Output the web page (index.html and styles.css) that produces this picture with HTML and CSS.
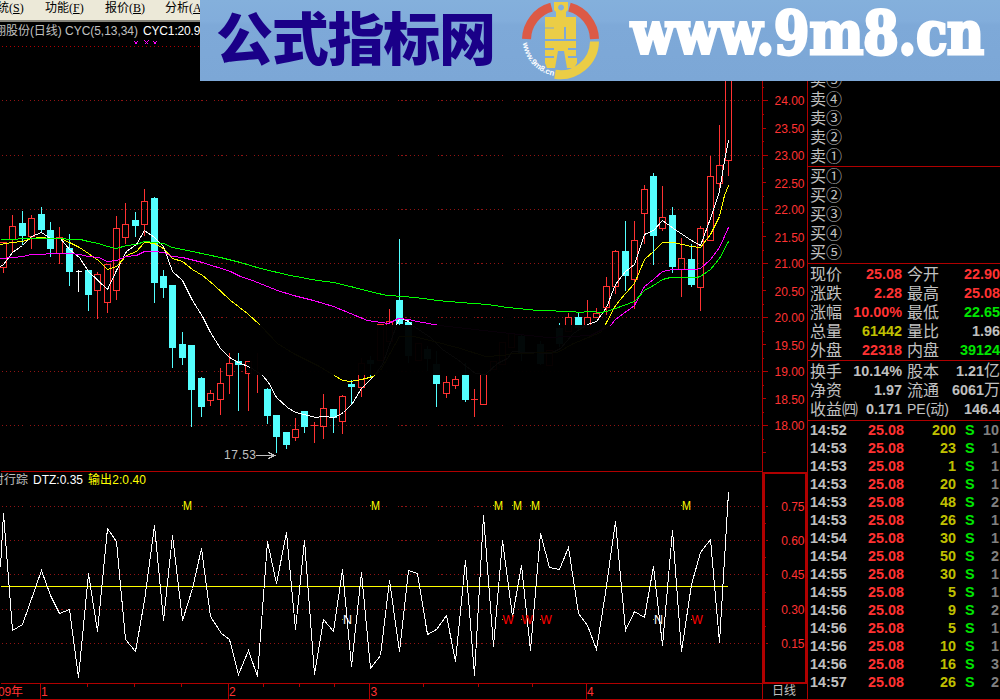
FILE: index.html
```html
<!DOCTYPE html>
<html lang="zh-CN">
<head>
    <meta charset="UTF-8">
    <meta name="viewport" content="width=device-width, initial-scale=1.0">
    <title>路翔股份 日线</title>
    <link rel="stylesheet" href="styles.css">
</head>
<body>
    <div class="app">
        <div class="left">
            <div class="menubar">
                <span>系统(<u>S</u>)</span>
                <span>功能(<u>F</u>)</span>
                <span>报价(<u>B</u>)</span>
                <span>分析(<u>A</u>)</span>
            </div>

            <svg class="chart" width="807" height="449" viewBox="0 22 807 449">
                <text class="cjk grey" x="-6" y="35" textLength="144">翔股份(日线) CYC(5,13,34)</text>
                <text class="cjk white" x="143" y="35" textLength="64">CYC1:20.93</text>
                <g class="crisp" transform="translate(.5 .5)">
                    <path class="magenta" d="M134 41l3 3m0-3l-3 3M144 40l4 4m0-4l-4 4M153 41l3 3m0-3l-3 3"/>
                    <path class="grid bright" d="M1 46H762"/>
                    <path class="grid" d="M1 100H762M1 155H762M1 209H762M1 263H762M1 317H762M1 371H762M1 425H762"/>

                    <!-- rising candles -->
                    <path class="up" d="M3 267V272M12 214V226M12 239V251M31 214V218M31 236V248M59 226V237M59 253V263M97 271V274M97 290V318M107 302V312M116 215V228M116 290V299M125 202V224M125 237V243M144 188V201M144 224V235M210 389V393M210 400V405M220 367V383M220 399V414M229 352V363M229 375V393M248 373V410M257 352V392M295 417V429M295 437V440M314 421V442M310 425H317M323 393V408M323 426V438M342 394V396M342 421V433M361 357V363M361 387V396M389 308V321M446 375V382M446 393V397M455 375V379M455 385V388M474 388V416M470 399H477M568 312V317M587 299V317M596 307V313M606 276V286M606 307V314M615 249V251M615 286V293M634 220V240M634 279V308M644 184V189M644 213V243M662 185V217M662 228V230M681 237V258M681 269V296M700 225V228M700 287V310M710 155V176M719 124V165M719 183V188M728 160V175"/>
                    <path class="up" d="M-1 242h7v25h-7zM9 226h6v13h-6zM28 218h6v18h-6zM56 237h6v16h-6zM94 274h6v16h-6zM104 264h6v38h-6zM113 228h6v62h-6zM122 224h6v13h-6zM141 201h6v23h-6zM207 393h6v7h-6zM217 383h6v16h-6zM226 363h6v12h-6zM245 361h6v12h-6zM292 429h6v8h-6zM320 408h6v18h-6zM339 396h6v25h-6zM358 363h6v24h-6zM377 324h6v36h-6zM386 321h6v20h-6zM415 343h6v17h-6zM443 382h6v11h-6zM452 379h6v6h-6zM480 374h6v30h-6zM490 361h6v8h-6zM499 342h6v22h-6zM508 333h6v14h-6zM546 350h6v15h-6zM565 317h6v14h-6zM584 317h6v10h-6zM593 313h6v4h-6zM603 286h6v21h-6zM612 251h6v35h-6zM631 240h6v39h-6zM641 189h6v24h-6zM659 217h6v11h-6zM678 258h6v11h-6zM697 228h6v59h-6zM707 176h6v64h-6zM716 165h6v18h-6zM725 60h6v100h-6z"/>

                    <!-- falling candles -->
                    <path class="down" d="M22 210V244M41 206V231M50 221V256M69 233V285M88 270V310M135 211V236M154 196V302M163 269V297M172 285V367M182 331V364M191 345V426M201 376V416M238 352V410M267 387V423M276 415V452M286 432V448M304 411V432M333 409V432M351 379V403M370 355V377M399 238V325M408 318V362M427 345V370M436 350V406M465 362V401M521 333V360M540 340V364M559 322V346M578 312V330M625 220V290M653 172V264M672 206V272M691 243V286"/>
                    <path class="down-body" d="M19 223h6v12h-6zM38 214h6v15h-6zM47 230h6v18h-6zM66 248h6v23h-6zM85 270h6v24h-6zM132 220h6v5h-6zM151 198h6v84h-6zM160 276h6v11h-6zM169 285h6v62h-6zM179 344h6v13h-6zM188 345h6v44h-6zM198 378h6v28h-6zM235 361h6v3h-6zM264 389h6v26h-6zM273 415h6v21h-6zM283 432h6v12h-6zM301 411h6v15h-6zM330 409h6v8h-6zM348 384h6v2h-6zM367 360h6v3h-6zM396 300h6v23h-6zM405 322h6v33h-6zM424 349h6v9h-6zM433 364h6v19h-6zM462 375h6v24h-6zM518 336h6v17h-6zM537 344h6v19h-6zM556 328h6v15h-6zM575 317h6v10h-6zM622 251h6v24h-6zM650 176h6v59h-6zM669 215h6v51h-6zM688 259h6v25h-6z"/>
                    <path class="white-line" d="M78 269V291M75 271H81"/>

                    <!-- CYC lines -->
                    <polyline class="white-line" points="0,266 3,264 12,252 22,245 31,236 41,232 50,238 60,238 69,249 79,257 88,271 107,289 116,270 126,251 136,244 144,230 154,237 163,246 172,271 182,280 192,300 202,316 210,332 220,348 229,357 238,362 250,367 262,375 268,382 276,397 287,407 295,412 304,414 315,417 323,416 334,417 343,412 352,403 361,388 373,376 382,364 396,325 399,318 402,318 408,321 412,325 430,337 442,349 457,359 475,373 485,374 497,363 507,358 512,351 527,352 550,353 560,348 573,333 587,324 596,321 606,307 615,284 625,271 634,264 644,234 653,230 662,220 673,228 691,240 700,245 710,218 719,191 724,160 728,140"/>
                    <polyline class="yellow" points="0,244 12,242 22,241 31,238 41,237 50,238 60,238 69,242 79,247 88,253 98,260 107,269 116,266 126,255 136,251 144,242 154,243 163,248 172,258 182,261 192,269 202,275 213,284 230,300 247,313 260,325 277,343 293,353 317,365 334,375 342,380 350,381 361,379 373,376 380,370 399,336 413,336 430,340 460,348 485,356 503,355 512,353 557,352 573,343 600,332 605,324 615,305 625,293 634,283 644,259 653,251 662,242 673,242 682,244 691,246 700,247 710,234 719,216 724,195 728,185"/>
                    <polyline class="magenta" points="0,258 13,257 22,256 31,254 41,254 50,253 69,253 79,254 88,256 98,257 107,261 116,260 126,256 136,255 144,251 154,251 163,252 172,256 182,257 202,262 230,271 240,276 252,280 277,290 293,295 313,300 333,306 350,313 367,320 388,323 398,318 408,319 417,321 439,325 510,333 547,337 590,335 610,325 615,319 634,305 644,286 653,279 662,271 672,269 695,269 700,268 710,259 719,247 728,227"/>
                    <polyline class="green" points="0,239 17,239 18,238 65,238 66,239 80,239 88,241 98,243 107,246 116,248 126,245 136,244 144,241 154,242 163,243 172,247 192,251 220,257 240,262 260,268 290,275 317,280 333,282 350,286 373,292 387,295 403,296 423,298 437,300 460,302 487,304 507,307 537,310 573,311 578,312 590,311 600,312 606,311 615,308 634,301 644,290 653,285 662,279 670,277 696,277 700,276 710,269 719,258 728,241"/>

                    <path class="arrow" d="M255 455H274M268 452L274 455L268 458"/>
                </g>
                <rect class="veil" x="250" y="325" width="360" height="50"/>
                <text class="cjk grey" x="224" y="459" textLength="32">17.53</text>

                <!-- price scale -->
                <g class="crisp" transform="translate(.5 .5)">
                    <path class="frame" d="M762 22V471M807 22V471M762 100h5M762 155h5M762 209h5M762 263h5M762 317h5M762 371h5M762 425h5M762 128h3M762 182h3M762 236h3M762 290h3M762 344h3M762 398h3M762 452h3M762 87h1M762 114h1M762 141h1M762 168h1M762 196h1M762 222h1M762 250h1M762 277h1M762 304h1M762 331h1M762 358h1M762 385h1M762 412h1M762 439h1"/>
                </g>
                <g class="scale">
                    <text x="804.5" y="105">24.00</text>
                    <text x="804.5" y="133">23.50</text>
                    <text x="804.5" y="160">23.00</text>
                    <text x="804.5" y="188">22.50</text>
                    <text x="804.5" y="214">22.00</text>
                    <text x="804.5" y="242">21.50</text>
                    <text x="804.5" y="268">21.00</text>
                    <text x="804.5" y="296">20.50</text>
                    <text x="804.5" y="322">20.00</text>
                    <text x="804.5" y="350">19.50</text>
                    <text x="804.5" y="376">19.00</text>
                    <text x="804.5" y="404">18.50</text>
                    <text x="804.5" y="430">18.00</text>
                </g>
            </svg>

            <svg class="chart" width="807" height="212" viewBox="0 471 807 212">
                <text class="cjk grey" x="-8" y="484" textLength="36">时行踪</text>
                <text class="cjk white" x="33" y="484" textLength="50">DTZ:0.35</text>
                <text class="cjk yellow-text" x="88" y="484" textLength="58">输出2:0.40</text>
                <g class="crisp" transform="translate(.5 .5)">
                    <path class="grid" d="M1 506H762M1 540H762M1 574H762M1 609H762M1 643H762"/>
                    <path class="yellow" d="M0 586H727"/>
                    <polyline class="white-line" points="0,567 3,513 12,630 22,624 41,570 50,595 59,613 69,609 78,677 88,573 97,631 107,528 116,541 125,639 135,651 144,600 154,525 163,620 172,535 182,620 192,588 201,548 210,616 221,633 229,639 238,674 248,650 257,676 267,541 276,583 286,532 295,629 304,540 314,674 323,619 333,631 342,569 351,666 361,572 370,668 380,655 389,580 399,651 408,570 417,573 427,634 436,629 446,615 455,661 465,560 474,675 483,515 493,646 502,540 512,616 521,565 530,650 540,533 549,567 559,569 568,547 578,613 587,625 596,649 605,592 615,521 625,630 634,611 644,617 653,566 662,645 672,530 681,651 691,584 700,552 710,539 719,642 728,492"/>
                    <path class="dot" d="M181 505h1M369 505h1M492 505h1M511 505h1M529 505h1M680 505h1M341 619h1M501 619h1M520 619h1M539 619h1M652 619h1M690 619h1"/>
                    <path class="frame" d="M0 471H762M762 471V683M807 471V683"/>
                </g>
                <g class="mark yellow-text">
                    <text x="183" y="510" textLength="9" lengthAdjust="spacingAndGlyphs">M</text>
                    <text x="371" y="510" textLength="9" lengthAdjust="spacingAndGlyphs">M</text>
                    <text x="494" y="510" textLength="9" lengthAdjust="spacingAndGlyphs">M</text>
                    <text x="513" y="510" textLength="9" lengthAdjust="spacingAndGlyphs">M</text>
                    <text x="531" y="510" textLength="9" lengthAdjust="spacingAndGlyphs">M</text>
                    <text x="682" y="510" textLength="9" lengthAdjust="spacingAndGlyphs">M</text>
                </g>
                <g class="mark white">
                    <text x="343" y="624" textLength="9" lengthAdjust="spacingAndGlyphs">N</text>
                    <text x="654" y="624" textLength="9" lengthAdjust="spacingAndGlyphs">N</text>
                </g>
                <g class="mark red-text">
                    <text x="502.500" y="624">W</text>
                    <text x="521.500" y="624">W</text>
                    <text x="540.500" y="624">W</text>
                    <text x="691.500" y="624">W</text>
                </g>
                <rect class="box" x="764" y="473" width="42" height="210"/>
                <g class="crisp" transform="translate(.5 .5)">
                    <path class="frame" d="M765 506h2M765 540h2M765 574h2M765 609h2M765 643h2M764 523h1M764 557h1M764 592h1M764 626h1"/>
                </g>
                <g class="scale">
                    <text x="804.5" y="511">0.75</text>
                    <text x="804.5" y="545">0.60</text>
                    <text x="804.5" y="579">0.45</text>
                    <text x="804.5" y="614">0.30</text>
                    <text x="804.5" y="648">0.15</text>
                </g>
            </svg>

            <svg class="chart" width="807" height="17" viewBox="0 683 807 17">
                <g class="crisp" transform="translate(.5 .5)">
                    <path class="frame" d="M0 683H807M0 699H807M40 683V699M228 683V699M369 683V699M586 683V699M762 683V699M807 683V699M87 683v3M134 683v3M181 683v3M263 683v3M299 683v3M334 683v3M423 683v3M478 683v3M532 683v3"/>
                </g>
                <text class="cjk scale-red" x="-2" y="696" textLength="25">09年</text>
                <text class="cjk scale-red" x="41" y="696">1</text>
                <text class="cjk scale-red" x="229" y="696">2</text>
                <text class="cjk scale-red" x="370.500" y="696">3</text>
                <text class="cjk scale-red" x="587" y="696">4</text>
                <text class="cjk grey" x="772" y="695">日线</text>
            </svg>
        </div>

        <div class="quote">
            <div class="section asks">
                <div class="level">卖⑤</div>
                <div class="level">卖④</div>
                <div class="level">卖③</div>
                <div class="level">卖②</div>
                <div class="level">卖①</div>
            </div>
            <div class="section bids">
                <div class="level">买①</div>
                <div class="level">买②</div>
                <div class="level">买③</div>
                <div class="level">买④</div>
                <div class="level">买⑤</div>
            </div>
            <div class="section stats day">
                <span>现价</span><b class="r">25.08</b><span>今开</span><b class="r">22.90</b>
                <span>涨跌</span><b class="r">2.28</b><span>最高</span><b class="r">25.08</b>
                <span>涨幅</span><b class="r">10.00%</b><span>最低</span><b class="g">22.65</b>
                <span>总量</span><b class="y">61442</b><span>量比</span><b>1.96</b>
                <span>外盘</span><b class="r">22318</b><span>内盘</span><b class="g">39124</b>
            </div>
            <div class="section stats base">
                <span>换手</span><b>10.14%</b><span>股本</span><b>1.21<i>亿</i></b>
                <span>净资</span><b>1.97</b><span>流通</span><b>6061<i>万</i></b>
                <span>收益㈣</span><b>0.171</b><span class="pe">PE(动)</span><b>146.4</b>
            </div>
            <div class="section ticks">
                <b>14:52</b><b class="r">25.08</b><b class="y">200</b><b class="g">S</b><b class="n">10</b>
                <b>14:53</b><b class="r">25.08</b><b class="y">23</b><b class="g">S</b><b class="n">1</b>
                <b>14:53</b><b class="r">25.08</b><b class="y">1</b><b class="g">S</b><b class="n">1</b>
                <b>14:53</b><b class="r">25.08</b><b class="y">20</b><b class="g">S</b><b class="n">1</b>
                <b>14:53</b><b class="r">25.08</b><b class="y">48</b><b class="g">S</b><b class="n">2</b>
                <b>14:53</b><b class="r">25.08</b><b class="y">26</b><b class="g">S</b><b class="n">1</b>
                <b>14:54</b><b class="r">25.08</b><b class="y">30</b><b class="g">S</b><b class="n">1</b>
                <b>14:54</b><b class="r">25.08</b><b class="y">50</b><b class="g">S</b><b class="n">2</b>
                <b>14:55</b><b class="r">25.08</b><b class="y">30</b><b class="g">S</b><b class="n">1</b>
                <b>14:55</b><b class="r">25.08</b><b class="y">5</b><b class="g">S</b><b class="n">1</b>
                <b>14:56</b><b class="r">25.08</b><b class="y">9</b><b class="g">S</b><b class="n">2</b>
                <b>14:56</b><b class="r">25.08</b><b class="y">5</b><b class="g">S</b><b class="n">1</b>
                <b>14:56</b><b class="r">25.08</b><b class="y">10</b><b class="g">S</b><b class="n">1</b>
                <b>14:56</b><b class="r">25.08</b><b class="y">16</b><b class="g">S</b><b class="n">3</b>
                <b>14:57</b><b class="r">25.08</b><b class="y">26</b><b class="g">S</b><b class="n">2</b>
            </div>
        </div>

        <div class="banner">
            <svg width="800" height="81" viewBox="0 0 800 81">
                <text class="site-name" x="16" y="60" textLength="280">公式指标网</text>
                <g transform="translate(320 0)">
                    <path class="ring-red" d="M6.500 39A34 34 0 0 1 31.500 7.200M49.500 7.200A34 34 0 0 1 74.500 39"/>
                    <path class="ring-yellow" d="M74.500 41.500A34 34 0 0 1 35 74.300"/>
                    <path class="coin" fill-rule="evenodd" d="M34 2H48V10L46 12V17H56V39H46V27H44V39H25V28.500H34V27.500H25V17H36V12L34 10ZM41 4.500a3 3 0 1 0 .1 0Z"/>
                    <path class="coin" d="M25 41H56V48H48V50H56V56H48V58H57V63L54 68H47L44 51H38L35 68H27L25 63V58H34V56H25V50H34V48H25Z"/>
                    <path id="ringText" class="no-fill" d="M3 43A37 37 0 0 0 36 76"/>
                    <text class="ring-text"><textPath href="#ringText" textLength="48">www.9m8.cn</textPath></text>
                </g>
                <text class="site-url" x="431" y="54" textLength="353" lengthAdjust="spacingAndGlyphs">www.9m8.cn</text>
            </svg>
        </div>
    </div>
</body>
</html>
```
FILE: styles.css
```css
body {
    margin: 0;
    background-color: #000;
    font-family: "Liberation Sans", "Noto Sans CJK SC", sans-serif;
    overflow: hidden;
}
.app {
    position: relative;
    display: grid;
    grid-template-columns: 807px 193px;
    width: 1000px;
    height: 700px;
    overflow: hidden;
}
.left {
    display: flex;
    flex-direction: column;
}
.menubar {
    display: flex;
    gap: 18px;
    height: 22px;
    margin-left: -15px;
    background-color: #ece9d8;
    border-bottom: 2px solid #85837a;
    box-sizing: border-box;
    color: #000;
    font-family: "Liberation Serif", "Noto Sans CJK SC", serif;
    font-size: 12px;
    line-height: 16px;
}
.menubar span {
    width: 42px;
    white-space: nowrap;
}
.chart {
    display: block;
    flex-shrink: 0;
}
.crisp {
    shape-rendering: crispEdges;
    fill: none;
    stroke-width: 1;
}
.cjk {
    font-size: 12px;
}
.grey { fill: #c0c0c0; }
.white { fill: #fff; }
.yellow-text { fill: #ff0; }
.red-text { fill: #f00; }
.scale-red { fill: #ff3232; }
.grid {
    stroke: #901414;
    stroke-dasharray: 1 3;
}
.grid.bright { stroke: #b00000; }
.frame { stroke: #b00000; }
.up { stroke: #ff3232; }
.down { stroke: #54ffff; }
.down-body {
    stroke: #54ffff;
    fill: #54ffff;
}
.white-line { stroke: #fff; }
.yellow { stroke: #ff0; }
.magenta { stroke: #f0f; }
.green { stroke: #0f0; }
.arrow { stroke: #c0c0c0; }
.dot { stroke: #c0c000; }
.veil {
    fill: #000;
    opacity: 0.97;
}
.box {
    fill: none;
    stroke: #b00000;
    stroke-width: 2;
}
.scale {
    fill: #ff3232;
    font-size: 12px;
    text-anchor: end;
}
.mark {
    font-size: 12px;
}

/* quote panel */
.quote {
    display: flex;
    flex-direction: column;
    border-left: 1px solid #b00000;
    color: #c0c0c0;
    font-size: 16px;
    box-sizing: border-box;
    height: 700px;
    border-bottom: 1px solid #b00000;
}
.section {
    box-sizing: border-box;
    flex-shrink: 0;
    border-top: 1px solid #b00000;
    padding-left: 2px;
}
.section b {
    font-size: 14.4px;
}
.level {
    height: 19px;
    line-height: 19px;
}
.asks {
    display: flex;
    flex-direction: column;
    justify-content: flex-end;
    height: 166px;
    border-top: none;
}
.bids {
    height: 97px;
}
.stats {
    display: grid;
    grid-template-columns: 48px 44px 48px 1fr;
    grid-auto-rows: 19px;
    line-height: 19px;
    white-space: nowrap;
}
.stats b {
    justify-self: end;
}
.stats span:nth-child(4n+3) {
    padding-left: 5px;
}
.stats .pe {
    font-size: 14px;
}
.stats i {
    font-size: 16px;
    font-style: normal;
    font-weight: normal;
    line-height: 1;
}
.day {
    height: 97px;
    padding-top: 1px;
}
.base {
    height: 60px;
    padding-top: 1px;
}
.ticks {
    display: grid;
    grid-template-columns: 40px 54px 52px 23px 20px;
    grid-auto-rows: 18px;
    line-height: 18px;
    flex: 1;
}
.ticks b:nth-child(5n+2),
.ticks b:nth-child(5n+3),
.ticks b:nth-child(5n) {
    justify-self: end;
}
.ticks b:nth-child(5n+4) {
    padding-left: 9px;
}
.r { color: #ff3232; }
.g { color: #00e600; }
.y { color: #c0c000; }
.n { color: #808080; }

/* site banner over the menu bar */
.banner {
    position: absolute;
    left: 200px;
    top: 0;
    width: 800px;
    height: 81px;
    background: linear-gradient(#84b0dc 0, #82addb 21px, #7ea9d8 25px, #7ca7d6 100%);
}
.banner svg {
    display: block;
}
.site-name {
    font-family: "Noto Sans CJK SC", sans-serif;
    font-size: 57px;
    font-weight: 900;
    fill: #1a0088;
}
.site-url {
    font-family: "DejaVu Serif Condensed", "DejaVu Serif", serif;
    font-size: 59px;
    font-weight: bold;
    fill: #fff;
    stroke: #fff;
    stroke-width: 3;
}
.ring-red, .ring-yellow {
    fill: none;
    stroke: #dc5a46;
    stroke-width: 9;
}
.ring-yellow { stroke: #ebcd46; }
.coin { fill: #ebcd46; }
.no-fill { fill: none; }
.ring-text {
    fill: #fff;
    font-size: 8px;
    font-weight: bold;
}
```
